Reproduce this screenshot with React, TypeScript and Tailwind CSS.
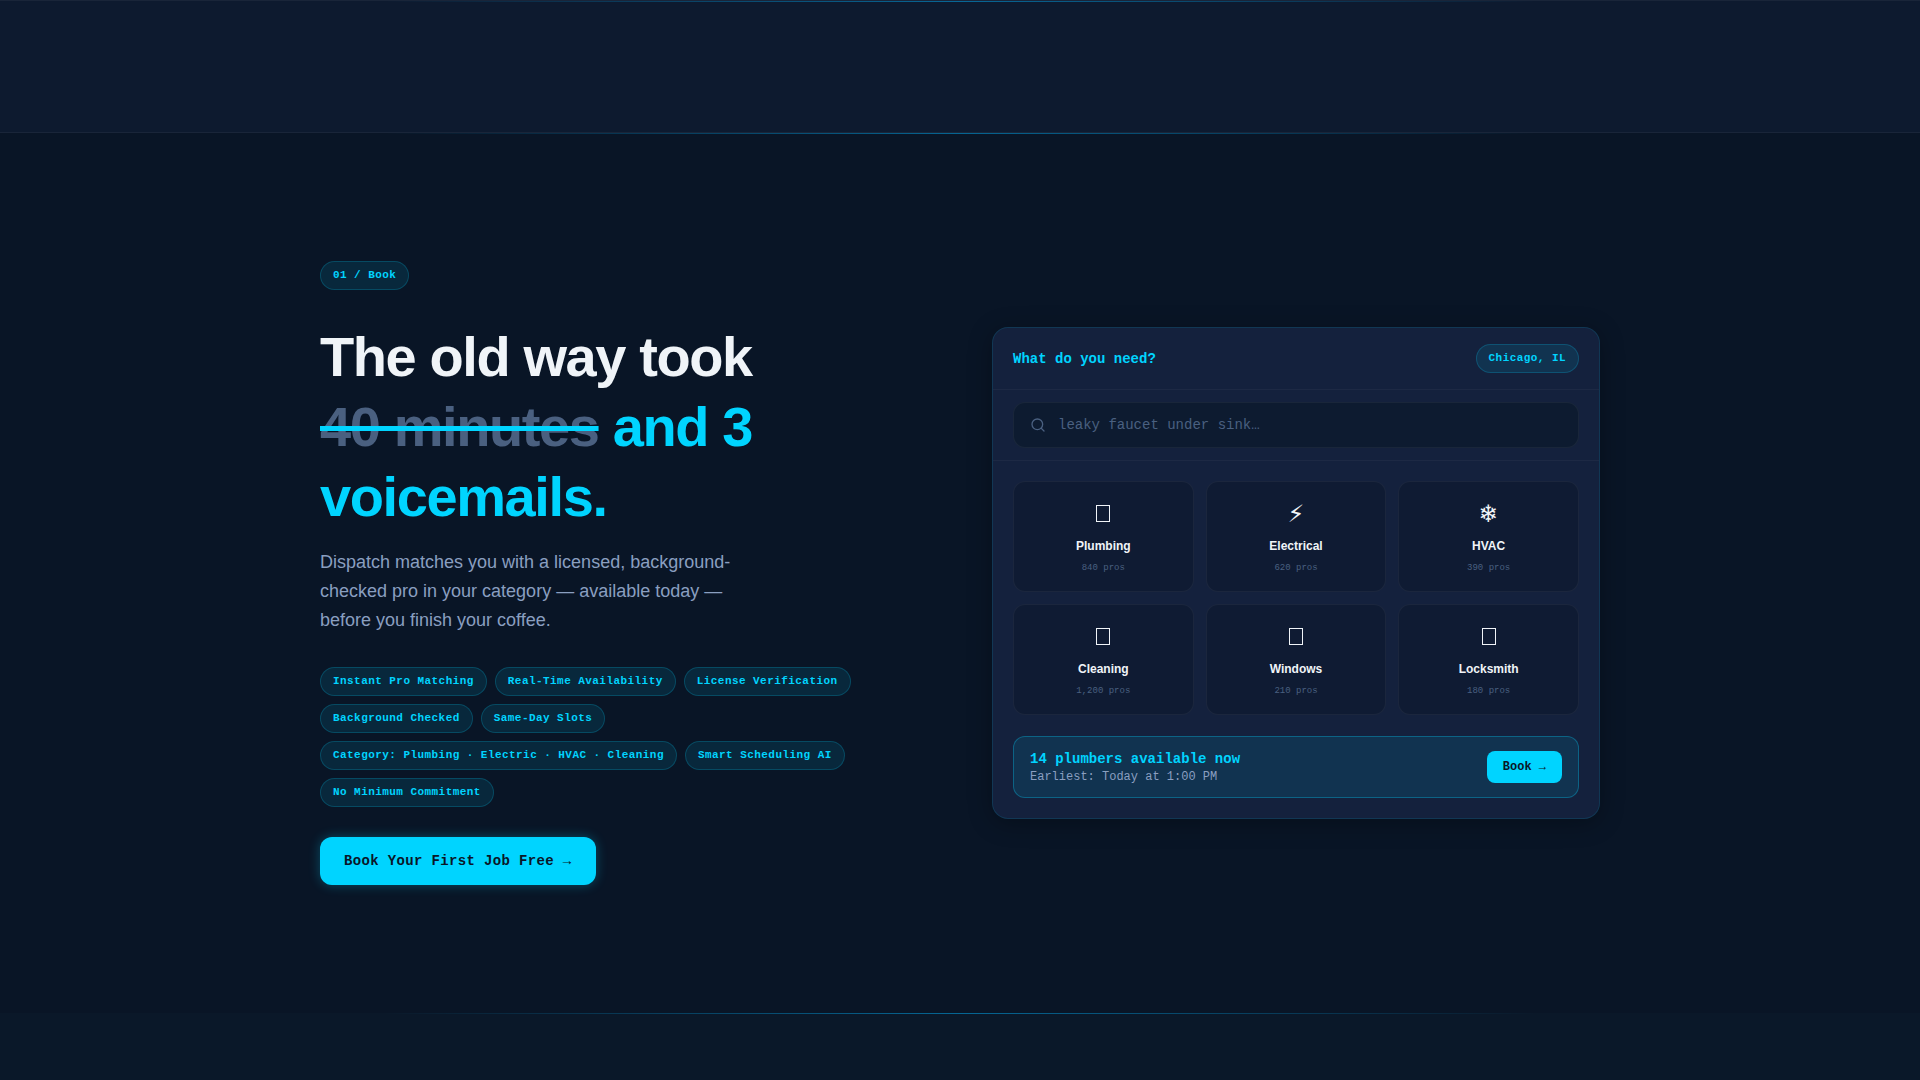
import { Search } from "lucide-react";

const features = [
  "Instant Pro Matching",
  "Real-Time Availability",
  "License Verification",
  "Background Checked",
  "Same-Day Slots",
  "Category: Plumbing · Electric · HVAC · Cleaning",
  "Smart Scheduling AI",
  "No Minimum Commitment",
];

// Categories without a glyph get an outlined box
const categories = [
  { name: "Plumbing", pros: "840 pros" },
  { glyph: "⚡\uFE0E", name: "Electrical", pros: "620 pros" },
  { glyph: "❄\uFE0E", name: "HVAC", pros: "390 pros" },
  { name: "Cleaning", pros: "1,200 pros" },
  { name: "Windows", pros: "210 pros" },
  { name: "Locksmith", pros: "180 pros" },
];

function Pill({ children }: { children: string }) {
  return (
    <span className="inline-block rounded-full border border-[#00d4ff]/20 bg-[#00d4ff]/10 px-3 py-1 font-['Liberation_Mono',monospace] text-[11px] leading-[19px] font-bold tracking-[0.04em] whitespace-nowrap text-[#00d4ff]">
      {children}
    </span>
  );
}

function GlowLine() {
  return (
    <div className="mx-[20%] h-px bg-linear-to-r from-transparent via-[#00b4ff]/50 to-transparent" />
  );
}

function BookingCard() {
  return (
    <div className="overflow-hidden rounded-2xl border border-[#00d4ff]/12 bg-[#14213d] font-['Liberation_Mono',monospace] shadow-[0_4px_24px_rgba(0,0,0,0.3)]">
      {/* Header */}
      <div className="flex items-center justify-between border-b border-white/4 px-5 py-4">
        <h2 className="text-sm font-bold text-[#00d4ff]">What do you need?</h2>
        <Pill>Chicago, IL</Pill>
      </div>

      {/* Search */}
      <div className="border-b border-white/4 px-5 py-3">
        <label className="flex items-center gap-3 rounded-xl border border-white/5 bg-[#0d1b30] px-4 py-[10px]">
          <Search className="h-4 w-4 flex-none text-[#4a6080]" />
          <input
            type="text"
            aria-label="What do you need?"
            placeholder="leaky faucet under sink…"
            className="h-6 min-w-0 flex-1 bg-transparent text-sm text-[#f0f4f8] outline-none placeholder:text-[#4a6080]"
          />
        </label>
      </div>

      {/* Categories */}
      <div className="grid grid-cols-3 gap-3 px-5 pt-5 pb-[21px]">
        {categories.map((category) => (
          <button
            key={category.name}
            type="button"
            className="rounded-xl border border-white/5 bg-[#0f1b33] px-4 pt-4 pb-[14px] text-center font-['Liberation_Sans',sans-serif] text-[#f0f4f8]"
          >
            <div className="flex h-[38px] items-start justify-center font-['DejaVu_Sans',sans-serif] text-2xl leading-[32px]">
              {category.glyph ?? (
                <span className="mt-[7px] h-[17px] w-[14px] border border-[#f0f4f8]" />
              )}
            </div>
            <div className="text-xs leading-5 font-bold">{category.name}</div>
            <div className="mt-1 font-['Liberation_Mono',monospace] text-[9px] leading-[17px] text-[#4a6080]">
              {category.pros}
            </div>
          </button>
        ))}
      </div>

      {/* Availability */}
      <div className="mx-5 mb-5 flex items-center justify-between rounded-xl border border-[#00d4ff]/30 bg-[#00d4ff]/10 px-4 py-3">
        <div>
          <p className="text-sm leading-5 font-bold text-[#00d4ff]">
            14 plumbers available now
          </p>
          <p className="text-xs leading-4 text-[#8a9fc0]">
            Earliest: Today at 1:00 PM
          </p>
        </div>
        <button
          type="button"
          className="h-8 rounded-lg bg-[#00d4ff] px-4 text-xs font-bold text-[#0a1628]"
        >
          Book →
        </button>
      </div>
    </div>
  );
}

export default function App() {
  return (
    <div className="min-h-screen bg-[#0a1829] font-['Liberation_Sans',sans-serif]">
      <div className="h-[133px] border-y border-white/5 bg-[#0d1a2f]">
        <GlowLine />
      </div>

      <section className="bg-[#091526]">
        <GlowLine />
        <div className="mx-auto grid max-w-[1280px] grid-cols-2 items-center gap-16 pt-[127px] pb-32">
          <div>
            <div className="flex">
              <Pill>01 / Book</Pill>
            </div>
            <h1 className="mt-8 text-[56px] leading-[70px] font-bold tracking-tight text-[#00d4ff]">
              <span className="text-[#f0f4f8]">The old way took</span>
              <br />
              <span className="text-[#4a6080] line-through decoration-[#00d4ff]">
                40 minutes
              </span>{" "}
              and 3
              <br />
              voicemails.
            </h1>
            <p className="mt-4 max-w-[440px] text-lg leading-[29px] text-[#8a9fc0]">
              Dispatch matches you with a licensed, background-checked pro in
              your category — available today — before you finish your coffee.
            </p>
            <div className="mt-8 flex flex-wrap gap-2">
              {features.map((feature) => (
                <Pill key={feature}>{feature}</Pill>
              ))}
            </div>
            <button
              type="button"
              className="mt-[30px] block h-12 rounded-xl bg-[#00d4ff] px-6 font-['Liberation_Mono',monospace] text-sm font-bold tracking-wide text-[#0a1628] shadow-[0_0_12px_rgba(0,212,255,0.3)]"
            >
              Book Your First Job Free →
            </button>
          </div>

          <BookingCard />
        </div>
      </section>

      <GlowLine />
    </div>
  );
}
